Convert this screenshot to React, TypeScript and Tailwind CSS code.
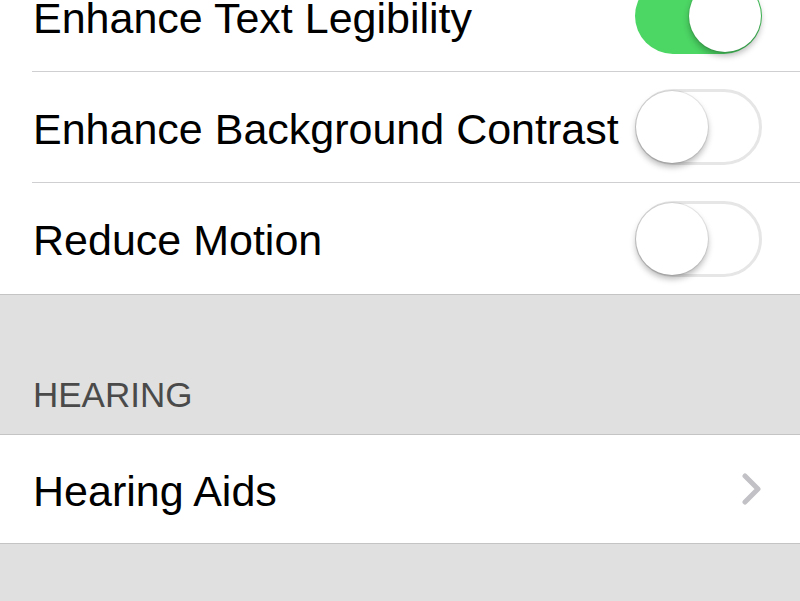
import React from "react";

const font = { fontFamily: '"Liberation Sans", Arial, sans-serif' };

function Toggle({ on }: { on: boolean }) {
  return (
    <div
      className={
        "relative h-[76px] w-[127px] shrink-0 rounded-full " +
        (on ? "bg-[#4cd664]" : "border-[3px] border-[#e6e6e6] bg-white")
      }
    >
      <div
        className={
          "absolute top-1/2 h-[72px] w-[72px] -translate-y-1/2 rounded-full bg-white shadow-[0_4px_6px_rgba(0,0,0,0.28),0_0_0_1px_rgba(0,0,0,0.08)] " +
          (on ? "right-[1px]" : "left-[-2px]")
        }
      />
    </div>
  );
}

function ToggleRow({ label, on, last }: { label: string; on: boolean; last?: boolean }) {
  return (
    <div className="bg-white pl-[32px]">
      <div
        className={
          "flex h-[111px] items-center justify-between pr-[38px] " +
          (last ? "" : "border-b border-[#cfcfd2]")
        }
      >
        <span className="pl-[1px] pt-[4px] text-[43px] leading-none text-black">{label}</span>
        <Toggle on={on} />
      </div>
    </div>
  );
}

export default function App() {
  return (
    <div className="h-[601px] w-[800px] overflow-hidden bg-[#e0e0e0]" style={font}>
      <div className="-mt-[39px]">
        <ToggleRow label="Enhance Text Legibility" on />
        <ToggleRow label="Enhance Background Contrast" on={false} />
        <ToggleRow label="Reduce Motion" on={false} last />
      </div>
      <div className="border-t border-[#c4c4c4]" />
      <div className="flex h-[139px] items-end px-[33px] pb-[22px]">
        <span className="text-[35px] leading-none text-[#4a4a4a]">HEARING</span>
      </div>
      <div className="flex h-[110px] items-center justify-between border-y border-[#c4c4c4] bg-white pl-[33px] pr-[37px]">
        <span className="pt-[4px] text-[43px] leading-none text-black">Hearing Aids</span>
        <svg width="22" height="32" viewBox="0 0 22 32" fill="none">
          <path d="M4 3 L17 16 L4 29" stroke="#c2c2c6" strokeWidth="5" strokeLinecap="round" strokeLinejoin="round" />
        </svg>
      </div>
    </div>
  );
}
